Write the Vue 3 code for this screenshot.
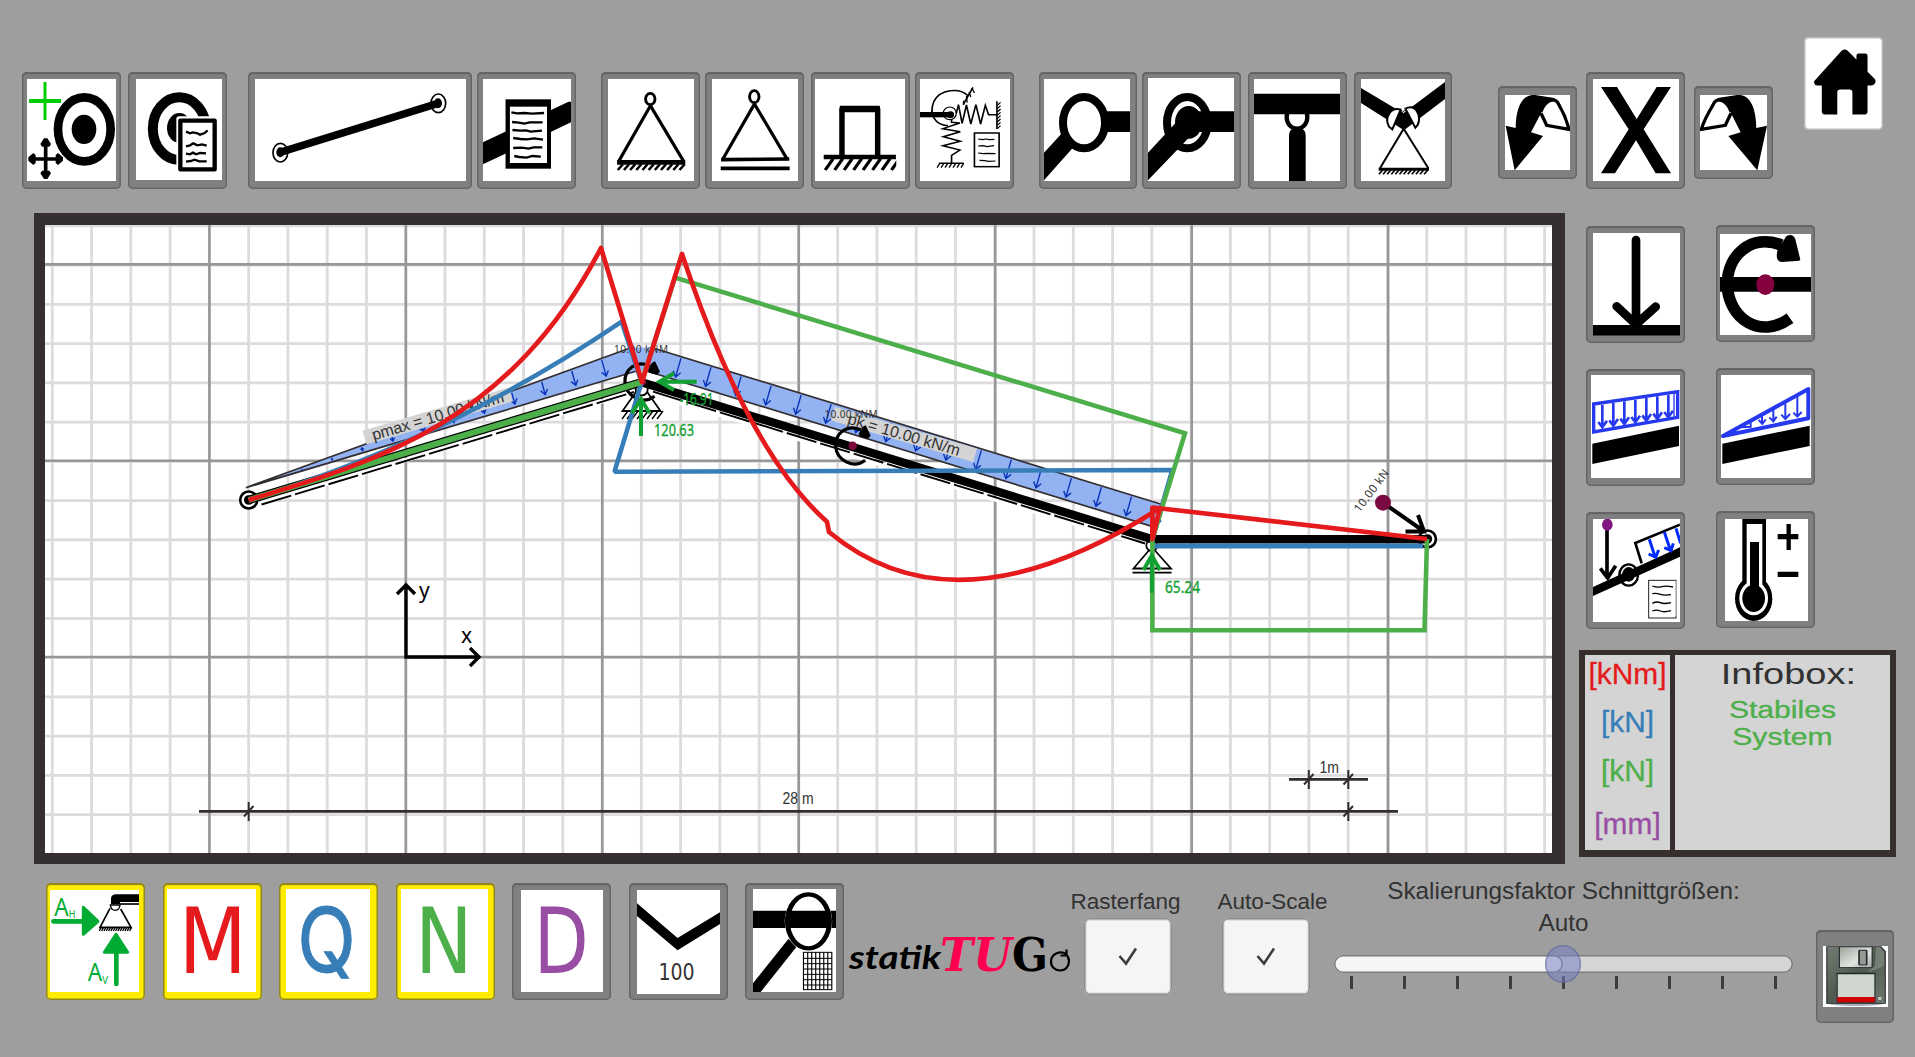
<script setup>
const range = (n) => Array.from({ length: n }, (_, i) => i)

// grid of the drawing area, one cell = 1 m
const minorX = range(39).map((i) => 52.3 + i * 39.27).filter((x) => x < 1552)
const minorY = range(16).map((i) => 225.8 + i * 39.25).filter((y) => y < 853)
const majorX = range(7).map((i) => 209.4 + i * 196.46)
const majorY = range(3).map((i) => 264.4 + i * 196.3)

// arrows of the distributed loads
const arrow = (x1, y1, x2, y2, w) => {
  const dx = x2 - x1
  const dy = y2 - y1
  const l = Math.hypot(dx, dy) || 1
  const ux = dx / l
  const uy = dy / l
  const f = (v) => v.toFixed(1)
  const s = Math.min(w, l * 0.6)
  return `M${f(x1)} ${f(y1)}L${f(x2)} ${f(y2)}M${f(x2 - ux * s - uy * s * 0.7)} ${f(y2 - uy * s + ux * s * 0.7)}L${f(x2)} ${f(y2)}L${f(x2 - ux * s + uy * s * 0.7)} ${f(y2 - uy * s - ux * s * 0.7)}`
}
const rightArrows = range(17).map((k) => {
  const x = 681 + k * 30.03
  const y = 347.7 + (x - 652.2) * 0.3075 + 1.5
  return arrow(x, y, x - 5.5, y + 19, 5.5)
})
const leftArrows = range(11).map((k) => {
  const x = 601.7 - k * 30
  const y = 487.7 - (x - 245.8) * 0.3633 + 1.5
  const gap = Math.max((x - 245.8) * 0.0575 - 3, 1)
  return arrow(x, y, x + gap * 0.26, y + gap * 0.93, 5)
})

const ticks = range(9)
</script>

<template>
  <div class="app">
    <header class="top">
      <button class="tool t-node">
        <svg viewBox="81 57 267 306" preserveAspectRatio="none">
          <path d="M87 123H183" stroke="#0c0" stroke-width="12" /><path d="M135 66V180" stroke="#0c0" stroke-width="9" />
          <ellipse cx="253" cy="208" rx="79" ry="96" fill="none" stroke="#000" stroke-width="26" />
          <ellipse cx="252" cy="208" rx="37" ry="44" />
          <path d="M137 245V345M92 297H182" stroke="#000" stroke-width="11" />
          <path d="M132 235h10l11 17-5 8h-22l-5-8zM132 357h10l11-17-5-8h-22l-5 8zM85 292v10l15 13 7-6v-24l-7-6zM189 292v10l-15 13-7-6v-24l7-6z" />
        </svg>
      </button>
      <button class="tool t-node-edit">
        <svg viewBox="408 57 258 303" preserveAspectRatio="none">
          <ellipse cx="538" cy="206" rx="79.500" ry="94" fill="none" stroke="#000" stroke-width="30" />
          <ellipse cx="538" cy="204" rx="37" ry="45" />
          <rect x="529" y="169" width="130" height="170" rx="8" fill="#fff" />
          <rect x="541" y="182" width="103" height="146" fill="#fff" stroke="#000" stroke-width="13" stroke-linejoin="round" />
          <path d="M558 215l12 5 8-3 12 2 10 5 14-5 9-8M558 259l12-3 10-6 12 6 14-3 14 4M558 281l12 2 9-5 9 5 13-4 17 1M558 305l14-2 12-4 14 5 22 0" fill="none" stroke="#000" stroke-width="7" />
        </svg>
      </button>
      <button class="tool t-beam">
        <svg viewBox="765 57 633 306" preserveAspectRatio="none">
          <g fill="#fff" stroke="#000" stroke-width="5"><ellipse cx="841" cy="278" rx="22" ry="28" /><ellipse cx="1315" cy="130" rx="22" ry="28" /></g>
          <ellipse cx="841" cy="277" rx="12" ry="15" /><ellipse cx="1314" cy="130" rx="12" ry="15" />
          <path d="M840 277L1314 130" stroke="#000" stroke-width="23" />
        </svg>
      </button>
      <button class="tool t-beam-edit">
        <svg viewBox="63 57 242 306" preserveAspectRatio="none">
          <path d="M63 247L298 125H305V187L63 313z" />
          <rect x="125" y="118" width="125" height="208" />
          <rect x="137" y="140" width="102" height="169" fill="#fff" />
          <path d="M141 157l16 3 20-1 20 2 34-2M143 186l18 2 16 3 14-4 36 0M144 210l22 2 16-1 12 4 31-3M146 234l20 3 18 1 20-3 24 4M146 264l24-1 18 3 14-4 24 0M149 288l14 3 20 2 16-5 23 2" fill="none" stroke="#000" stroke-width="7" />
        </svg>
      </button>

      <button class="tool t-pin">
        <svg viewBox="407 57 237 306" preserveAspectRatio="none">
          <g fill="none" stroke="#000">
            <ellipse cx="523.500" cy="117" rx="13" ry="17" stroke-width="8" />
            <path d="M524 137L437 303M524 137L615 303" stroke-width="9" /><path d="M432 307H620" stroke-width="14" />
            <path v-for="i in range(11)" :key="i" :d="`M${434 + i * 17} 330L${448 + i * 17} 313`" stroke-width="7" />
          </g>
        </svg>
      </button>
      <button class="tool t-roller">
        <svg viewBox="693 57 237 306" preserveAspectRatio="none">
          <g fill="none" stroke="#000">
            <ellipse cx="809.500" cy="110" rx="13" ry="18" stroke-width="8" />
            <path d="M722 299L810 132L901 299" stroke-width="9" />
            <path d="M718 299L906 297M717 325H907" stroke-width="11" />
          </g>
        </svg>
      </button>
      <button class="tool t-fixed">
        <svg viewBox="977 57 247 306" preserveAspectRatio="none">
          <path d="M1051 290V148H1149V290" fill="none" stroke="#000" stroke-width="15" stroke-linejoin="round" /><path d="M1045 147H1155" stroke="#000" stroke-width="19" />
          <path d="M1001 291H1199" stroke="#000" stroke-width="13" />
          <path v-for="i in range(8)" :key="i" :d="`M${1005 + i * 26} 330L${1027 + i * 26} 296`" stroke="#000" stroke-width="9" />
          <path d="M1200 290h24v45h-24z" fill="#fff" />
        </svg>
      </button>
      <button class="tool t-spring">
        <svg viewBox="1265 57 248 306" preserveAspectRatio="none">
          <path d="M1265 164H1350" stroke="#000" stroke-width="16" /><circle cx="1349" cy="164" r="10" />
          <g fill="none" stroke="#000" stroke-width="4.500">
            <path d="M1398 108C1375 82 1320 86 1303 125C1289 162 1306 196 1342 197" />
            <ellipse cx="1347" cy="160" rx="18" ry="19" stroke-width="3.500" />
            <path d="M1365 160L1371 134 1381 190 1393 135 1405 192 1419 134 1432 192 1445 136 1454 164H1477" />
            <path d="M1352 177V187L1375 189 1328 206 1376 215 1329 230 1376 244 1328 257 1375 270 1352 286V310" />
            <path d="M1317 310H1386M1477 124V207" />
            <path d="M1384 134L1411 82" />
            <path v-for="i in range(7)" :key="'g' + i" :d="`M${1312 + i * 11} 323L${1319 + i * 11} 311`" stroke-width="3.500" />
            <path v-for="i in range(8)" :key="'w' + i" :d="`M1478 ${136 + i * 10}L1487 ${127 + i * 10}`" stroke-width="3.500" />
            <path d="M1385 122v13M1393 108l2 20M1400 96l5 15M1408 84l7 15" stroke-width="3.500" />
            <rect x="1415" y="219" width="68" height="101" />
            <path d="M1425 237l12 2 10-2 10 2 13-1M1425 258l14-1 10 3 20-3M1425 279l14 2 12-1 22 1M1429 301l14 1 12 2 18-1" stroke-width="3.500" />
          </g>
        </svg>
      </button>

      <button class="tool t-hinge">
        <svg viewBox="72 57 258 306" preserveAspectRatio="none">
          <path d="M250 154H330V216H250zM72 278L127 218L160 262L72 361z" />
          <ellipse cx="192" cy="188" rx="63" ry="77" fill="#fff" stroke="#000" stroke-width="24" />
        </svg>
      </button>
      <button class="tool t-rigid">
        <svg viewBox="384 54 258 309" preserveAspectRatio="none">
          <ellipse cx="502" cy="188" rx="61" ry="77" fill="#fff" stroke="#000" stroke-width="24" />
          <ellipse cx="506" cy="187" rx="41" ry="49" />
          <path d="M506 154H642V216H506zM384 278L466 190L505 235L384 361z" />
        </svg>
      </button>
      <button class="tool t-tee">
        <svg viewBox="702 57 258 306" preserveAspectRatio="none">
          <ellipse cx="831" cy="172" rx="31" ry="34" fill="#fff" stroke="#000" stroke-width="13" />
          <path d="M702 101H960V163H702zM807 363V228Q807 207 822 206H842Q857 207 857 228V363z" />
        </svg>
      </button>
      <button class="tool t-hinge-pin">
        <svg viewBox="1023 57 252 306" preserveAspectRatio="none">
          <path d="M1023 84L1150 160L1275 66V117L1152 211L1023 129z" />
          <g fill="#fff" stroke="#000" stroke-width="6"><path d="M1142 149C1112 140 1092 173 1107 200L1117 208z" /><path d="M1156 146C1188 130 1205 168 1193 195L1186 203z" /></g>
          <path d="M1142 146L1147 158 1158 146" fill="#fff" stroke="#000" stroke-width="3" />
          <path d="M1151 206L1080 325M1151 206L1225 325" stroke="#000" stroke-width="6" /><path d="M1076 328H1227" stroke="#000" stroke-width="9" />
          <path v-for="i in range(12)" :key="i" :d="`M${1077 + i * 12.3} 343L${1088 + i * 12.3} 330`" stroke="#000" stroke-width="5" />
        </svg>
      </button>

      <button class="tool t-undo">
        <svg viewBox="105 225 195 225" preserveAspectRatio="none">
          <path d="M137 324C138 255 160 222 195 225L253 234L256 244C236 242 226 252 216 274L183 337L219 348L134 451L107 317z" />
          <path d="M213 274C225 243 255 225 267 255C282 280 290 300 297 328L230 316L213 280" fill="none" stroke="#000" stroke-width="10" />
        </svg>
      </button>
      <button class="tool t-clear">
        <svg viewBox="369 177 258 306" preserveAspectRatio="none">
          <path d="M393 201H441L500 297L560 201H603L521 328L603 460H557L498 361L435 460H393L476 328z" />
        </svg>
      </button>
      <button class="tool t-redo">
        <svg viewBox="690 225 201 225" preserveAspectRatio="none">
          <path d="M859 324C858 255 836 222 801 225L743 234L740 244C760 242 770 252 780 274L812 337L775 348L862 451L891 317z" />
          <path d="M783 274C771 243 741 225 729 255C714 280 702 300 694 328L766 316L783 280" fill="none" stroke="#000" stroke-width="10" />
        </svg>
      </button>
      <button class="tool home">
        <svg viewBox="1002 50 235 278" preserveAspectRatio="none">
          <path d="M1032 182L1114 91Q1123 83 1132 91L1158 117V105Q1158 99 1165 99H1184Q1191 99 1191 106V154L1212 175Q1218 182 1212 190Q1209 195 1202 195H1191V272Q1191 282 1181 282H1146V216Q1146 207 1137 207H1110Q1101 207 1101 216V282H1066Q1055 282 1055 272V195H1042Q1032 195 1032 182z" />
        </svg>
      </button>
    </header>

    <main class="middle">
      <div class="frame">
        <svg class="drawing" viewBox="45 225 1507 628" preserveAspectRatio="none">
          <g stroke="#dddbdd" stroke-width="2.800">
            <path v-for="x in minorX" :key="'x' + x" :d="`M${x} 225V853`" />
            <path v-for="y in minorY" :key="'y' + y" :d="`M45 ${y}H1552`" />
          </g>
          <g stroke="#979797" stroke-width="2.600">
            <path v-for="x in majorX" :key="'X' + x" :d="`M${x} 225V853`" />
            <path v-for="y in majorY" :key="'Y' + y" :d="`M45 ${y}H1552`" />
          </g>

          <g fill="#92b2f2">
            <path d="M245.800 487.700L631.500 347.500L638.400 370.500z" />
            <path d="M652.200 347.700L1163 504.700L1156 527.600L645 370.500z" />
            <path d="M631.500 347.500H652.200L645 370.500H638.400z" />
          </g>
          <g stroke="#332d2f" stroke-width="1.700">
            <path d="M245.800 487.700L631.500 347.500M245.800 487.700L638.400 370.500M652.200 347.700L1163 504.700M645 370.500L1156 527.600" />
          </g>
          <g fill="none" stroke="#0a34b8" stroke-width="1.400">
            <path v-for="d in rightArrows" :key="d" :d="d" />
            <path v-for="d in leftArrows" :key="d" :d="d" />
          </g>

          <g transform="translate(362.500 430.700) rotate(-16.500)">
            <rect width="152.500" height="14.500" fill="#d4d4d4" />
            <text class="sans" x="8" y="12.500" font-size="16" textLength="137">pmax = 10.00 kN/m</text>
          </g>
          <g transform="translate(835 407) rotate(16.300)">
            <rect width="148" height="14" fill="#d4d4d4" />
            <text class="sans" x="16" y="12.500" font-size="16" textLength="116">pk = 10.00 kN/m</text>
          </g>
          <text class="noto" x="614" y="352.500" font-size="10" textLength="54">10.00 kNM</text>
          <text class="noto" x="824.500" y="417.700" font-size="10" textLength="53">10.00 kNM</text>

          <g fill="none">
            <path d="M261 503.500L634 392M652 394L1146 546" stroke="#fff" stroke-width="4" />
            <path d="M261.500 504.500L634 392M653 391.700L1145 543.500" stroke="#000" stroke-width="1.900" stroke-dasharray="31 4" />
          </g>

          <g stroke="#000" stroke-width="2.600">
            <circle cx="248.700" cy="500" r="8.500" fill="#fff" /><circle cx="248.700" cy="500" r="3.500" />
            <circle cx="1427.400" cy="539" r="8.500" fill="#fff" /><circle cx="1427.400" cy="539" r="3.500" />
          </g>
          <g fill="#fff" stroke="#000" stroke-width="1.800">
            <path d="M641.600 384L622.500 411H660.500z" />
            <path v-for="i in range(8)" :key="i" :d="`M${622 + i * 5} 419L${628 + i * 5} 411`" stroke-width="1.400" />
            <circle cx="641.700" cy="389.500" r="6" />
            <path d="M1151.800 547L1133.500 568.500H1171z" /><path d="M1132.500 572.700H1171.500" />
            <circle cx="1151.800" cy="545.500" r="5.500" />
          </g>
          <g stroke="#000">
            <path d="M248.700 500L641.600 382.200" stroke-width="8.500" />
            <path d="M641.600 382.200L1152.400 539.200H1427.400" fill="none" stroke-width="8.400" />
          </g>

          <g v-for="c in [[642, 381.700], [852.700, 445.700]]" :key="c[0]" :transform="`translate(${c[0]} ${c[1]})`">
            <path d="M8 -16C-6 -22 -18 -12 -17 1C-16 14 0 24 12.500 14.500" fill="none" stroke="#000" stroke-width="3.200" />
            <path d="M10 -19L13 -20.500L18 -10L15 -7L7 -9L6 -12z" />
            <circle r="4.200" fill="#7d0a3e" />
          </g>

          <g fill="none" stroke="#377eb8" stroke-width="4.600">
            <path d="M248.700 500Q445.200 441 621.700 321.700L641.600 382.200L614.500 471.700L1172.300 470L1152.400 539" stroke-linejoin="bevel" />
            <path d="M1153 546H1423" stroke-width="4.800" />
          </g>
          <g fill="none" stroke="#4daf4a" stroke-width="4.600">
            <path d="M248.700 500L641.600 382.200" stroke-width="6" />
            <path d="M641.600 382.200L675 277.500L1185 433.300L1152.400 539V630.300H1424.500L1427 539" />
          </g>
          <path d="M248.700 500C379.700 460.700 510.600 421.500 601 248L642 382L682 254Q747.700 452 827 521.700L829 532Q957 638.500 1160 508L1152.400 539V507.500L1427 539" fill="none" stroke="#e41a1c" stroke-width="4.700" stroke-linejoin="round" />

          <g fill="none" stroke="#12a032" stroke-width="4">
            <path d="M641 436V400M632 413.300L641 399L649.500 413.300M696.700 381.700H661M674 373.300L659.500 381.700L674 390M1151.800 592.700V556M1143.500 570L1151.800 555.500L1160 570" />
          </g>
          <g class="noto green" font-size="16.500">
            <text x="679.500" y="405" textLength="34" lengthAdjust="spacingAndGlyphs">-16.91</text>
            <text x="654" y="436" textLength="40" lengthAdjust="spacingAndGlyphs">120.63</text>
            <text x="1165" y="593" textLength="35" lengthAdjust="spacingAndGlyphs">65.24</text>
          </g>

          <path d="M1383 502.700L1423.500 531M1418 515L1424 531.500L1405.500 531.500" fill="none" stroke="#000" stroke-width="4" />
          <circle cx="1383" cy="502.700" r="8" fill="#7a0a42" />
          <text class="noto" transform="translate(1359.500 513) rotate(-53)" font-size="11.500" textLength="50">10.00 kN</text>

          <path d="M406 586V657H478M397 594L406 585L415 594M470 648L479 657L470 666" fill="none" stroke="#000" stroke-width="3.400" />
          <text class="noto dark" x="419" y="598" font-size="21">y</text>
          <text class="noto dark" x="461" y="643" font-size="21">x</text>

          <g stroke="#332d2f" stroke-width="2.800">
            <path d="M1289 779.300H1368M199 811.300H1398" />
            <path d="M1308.800 770V789M1304 784.500L1313.500 774M1348.300 770V789M1343.500 784.500L1353 774M1348.300 802V821M1343.500 816.500L1353 806M248.700 802V821M244 816.500L253.500 806" stroke-width="2" />
          </g>
          <text class="sans" x="1319.500" y="773" font-size="16" textLength="19.500" lengthAdjust="spacingAndGlyphs">1m</text>
          <text class="sans" x="782.500" y="804" font-size="16" textLength="31" lengthAdjust="spacingAndGlyphs">28 m</text>
        </svg>
      </div>

      <aside class="side">
        <div class="loads">
          <div class="col">
            <button class="tool l-force">
              <svg viewBox="99 69 261 309" preserveAspectRatio="none">
                <path d="M99 345H360V377H99z" />
                <path d="M228 90V340M170 289L228 343L287 290" fill="none" stroke="#000" stroke-width="26" stroke-linecap="round" />
              </svg>
            </button>
            <button class="tool l-line">
              <svg viewBox="93 495 267 309" preserveAspectRatio="none">
                <path d="M97 701L357 647V708L97 762z" />
                <g fill="none" stroke="#2739ee">
                  <path d="M101 582L353 545V622L101 666z" stroke-width="10" />
                  <path v-for="i in range(7)" :key="i" :d="`M${127 + i * 33} ${584 - i * 5}v68m-12 -16l12 16l14 -20`" stroke-width="8" />
                  <path d="M342 550v70" stroke-width="4" />
                </g>
              </svg>
            </button>
            <button class="tool l-edit">
              <svg viewBox="99 927 261 309" preserveAspectRatio="none">
                <path d="M99 1131L360 1012V1040L99 1158z" />
                <ellipse cx="206" cy="1095" rx="28" ry="32" fill="none" stroke="#000" stroke-width="7" /><ellipse cx="206" cy="1093" rx="19" ry="22" />
                <path d="M245 1060L226 999L360 944" fill="none" stroke="#000" stroke-width="8" />
                <path d="M141 955V1105M121 1075L143 1104L167 1067" fill="none" stroke="#000" stroke-width="11" />
                <ellipse cx="142" cy="944" rx="16" ry="18" fill="#801880" />
                <path d="M268 988L285 1040M266 1032L287 1042L296 1020M313 966L331 1020M313 1013L333 1022L340 1000M348 955L362 1000" fill="none" stroke="#002bff" stroke-width="9" />
                <rect x="266" y="1111" width="82" height="113" fill="#fff" stroke="#222" stroke-width="3" />
                <path d="M347 1112V1218" stroke="#ccc" stroke-width="4" />
                <path d="M277 1128q15 6 28 2t34 1M277 1151q13-2 24 2t32 1M277 1180q13-7 24-2t32 0M277 1203q13-5 24 0t32-1" fill="none" stroke="#000" stroke-width="4" />
              </svg>
            </button>
          </div>
          <div class="col right">
            <button class="tool l-moment">
              <svg viewBox="480 72 273 303" preserveAspectRatio="none">
                <path d="M480 201H753V245H480z" />
                <path d="M664 105C575 70 501 135 502 224C504 325 600 390 690 325" fill="none" stroke="#000" stroke-width="35" />
                <path d="M675 85Q679 75 692 75Q703 77 706 88L721 149L717 152L666 156Q645 155 652 122z" />
                <ellipse cx="616" cy="224" rx="27" ry="31" fill="#84003e" />
              </svg>
            </button>
            <button class="tool l-tri">
              <svg viewBox="483 495 270 309" preserveAspectRatio="none">
                <path d="M487 701L749 647V708L487 762z" />
                <g fill="none" stroke="#2739ee">
                  <path d="M489 678L745 537V625z" stroke-width="12" stroke-linejoin="round" />
                  <path d="M712 558V620M700 608L712 620L725 606M676 580V625M664 614L676 627L690 612M640 598V632M628 622L640 634L650 620M606 616V640M596 630L607 642L617 628M572 636V648M540 652L575 650" stroke-width="6" />
                </g>
              </svg>
            </button>
            <button class="tool l-temp">
              <svg viewBox="495 927 249 306" preserveAspectRatio="none">
                <ellipse cx="581" cy="1166" rx="56" ry="67" /><path d="M547 927H618V1115H547z" />
                <ellipse cx="581" cy="1165" rx="43" ry="51" fill="#fff" /><path d="M560 942H607V1130H560z" fill="#fff" />
                <ellipse cx="581" cy="1165" rx="34" ry="41" /><path d="M570 996H597V1140H570z" />
                <path d="M653 980H715M653 1093H715" stroke="#000" stroke-width="16" /><path d="M686 942V1020" stroke="#000" stroke-width="13" />
              </svg>
            </button>
          </div>
        </div>

        <div class="info">
          <div class="units">
            <span class="u-m">[kNm]</span>
            <span class="u-q">[kN]</span>
            <span class="u-n">[kN]</span>
            <span class="u-d">[mm]</span>
          </div>
          <div class="message">
            <div class="title">Infobox:</div>
            <div class="status">Stabiles<br />System</div>
          </div>
        </div>
      </aside>
    </main>

    <footer class="bottom">
      <div class="results">
        <button class="tool on r-a">
          <svg viewBox="90 90 267 306" preserveAspectRatio="none">
            <g fill="#00ab33" stroke="#00ab33" stroke-linecap="round" stroke-linejoin="round">
              <path d="M100 184H190M289 372V280" stroke-width="14" /><path d="M190 142V223L234 184zM253 277L288 223L323 277z" stroke-width="9" />
            </g>
            <g class="noto">
              <text transform="translate(103 169) scale(.87 1)" font-size="78">A</text><text transform="translate(146 173) scale(.85 1)" font-size="32">H</text>
              <text transform="translate(203 364) scale(.87 1)" font-size="78">A</text><text transform="translate(247 373) scale(.9 1)" font-size="32">V</text>
            </g>
            <path d="M273 133V115Q275 103 288 103H357V126H300V133z" /><path d="M300 132H357" stroke="#000" stroke-width="5" />
            <path d="M270 145L240 202H333L302 147" fill="none" stroke="#000" stroke-width="5" />
            <path d="M271 135Q273 151 286 151Q299 150 300 135z" fill="#fff" stroke="#000" stroke-width="4" />
            <path v-for="i in range(14)" :key="i" :d="`M${238 + i * 7} 213L${243 + i * 7} 203`" stroke="#000" stroke-width="4" />
          </svg>
        </button>
        <button class="tool on r-m">
          <svg viewBox="441 87 264 309" preserveAspectRatio="none"><text class="deja red" transform="translate(476 340) scale(.86 1)" font-size="272">M</text></svg>
        </button>
        <button class="tool on r-q">
          <svg viewBox="798 87 252 309" preserveAspectRatio="none"><text class="inter blue" transform="translate(832 336) scale(.85 1)" font-size="270">Q</text></svg>
        </button>
        <button class="tool on r-n">
          <svg viewBox="1143 87 261 309" preserveAspectRatio="none"><text class="deja grass" transform="translate(1185 340) scale(.85 1)" font-size="272">N</text></svg>
        </button>
        <button class="tool r-d">
          <svg viewBox="81 90 214 306" preserveAspectRatio="none"><text class="deja violet" transform="translate(114 340) scale(.685 1)" font-size="272">D</text></svg>
        </button>
        <button class="tool r-100">
          <svg viewBox="384 90 217 312" preserveAspectRatio="none">
            <path d="M384 130L490 234L601 157V192L490 271L384 168z" />
            <text class="deja" transform="translate(440 359) scale(.73 1)" font-size="68">100</text>
          </svg>
        </button>
        <button class="tool r-zoom">
          <svg viewBox="687 87 217 309" preserveAspectRatio="none">
            <path d="M687 152H904V204H687z" />
            <path d="M780 236L800 262L707 396H687V370z" />
            <ellipse cx="832" cy="184" rx="62" ry="89" fill="#fff" /><path d="M778 152H886V204H778z" />
            <ellipse cx="832" cy="184" rx="55" ry="81" fill="none" stroke="#000" stroke-width="13" />
            <g fill="none" stroke="#000" stroke-width="3">
              <rect x="819" y="277" width="74" height="112" />
              <path v-for="i in range(6)" :key="'h' + i" :d="`M819 ${295 + i * 16}H893`" />
              <path v-for="i in range(6)" :key="'v' + i" :d="`M${830 + i * 10.5} 277V389`" />
            </g>
          </svg>
        </button>
      </div>

      <svg class="logo" viewBox="848 930 224 50">
        <text class="script" x="849" y="969" textLength="92" lengthAdjust="spacingAndGlyphs">statik</text>
        <text class="slab italic" x="940" y="971" font-size="46" textLength="72" lengthAdjust="spacingAndGlyphs">TU</text>
        <text class="slab" x="1012" y="971" font-size="46" textLength="36" lengthAdjust="spacingAndGlyphs">G</text>
        <path d="M1066 954C1060 950 1051 954 1051 961.500C1051 967 1055 970.500 1060 970.500C1066 970.500 1069 966 1069 961C1069 957 1067 955 1065 953M1066.500 949.500V955.500H1060.500" fill="none" stroke="#000" stroke-width="2.200" />
      </svg>

      <div class="toggle first">
        <label>Rasterfang</label>
        <div class="box"><svg viewBox="0 0 20 20"><path d="M1.500 9L8 16.500L18 1.500" /></svg></div>
      </div>
      <div class="toggle second">
        <label>Auto-Scale</label>
        <div class="box"><svg viewBox="0 0 20 20"><path d="M1.500 9L8 16.500L18 1.500" /></svg></div>
      </div>

      <div class="scale">
        <div class="caption">Skalierungsfaktor Schnittgrößen:</div>
        <div class="caption">Auto</div>
        <div class="track">
          <div class="fill"></div>
          <div class="knob"></div>
        </div>
        <div class="ticks"><i v-for="t in ticks" :key="t"></i></div>
      </div>

      <button class="tool save">
        <svg viewBox="1399 258 119 183" preserveAspectRatio="none">
          <defs>
            <linearGradient id="metal" x1="0" x2="1" y1="0" y2="1"><stop offset="0" stop-color="#747d73" /><stop offset=".5" stop-color="#50594f" /><stop offset="1" stop-color="#6e776d" /></linearGradient>
            <linearGradient id="shutter" x1="0" x2="1" y1="0" y2="1"><stop offset="0" stop-color="#9ba39b" /><stop offset=".6" stop-color="#e0e4df" /><stop offset="1" stop-color="#a3aaa3" /></linearGradient>
          </defs>
          <ellipse cx="1459" cy="430" rx="52" ry="8" fill="#a8adb5" />
          <path d="M1406 260H1505L1513 274V430H1406z" fill="url(#metal)" stroke="#20282b" stroke-width="2" />
          <path d="M1496 262H1503L1511 276V318L1480 338L1494 318z" fill="#8c948b" opacity=".6" />
          <path d="M1429 261H1489V322H1429z" fill="url(#shutter)" stroke="#20282b" stroke-width="2" />
          <rect x="1465" y="271" width="14" height="44" rx="2" fill="#929a91" stroke="#20282b" stroke-width="3" />
          <path d="M1424 338H1495V428H1424z" fill="#20282b" /><path d="M1426 343H1493V411H1426z" fill="#d0d5ce" /><path d="M1425 411H1494V427H1425z" fill="#cf0000" />
          <rect x="1500" y="411" width="6" height="9" fill="#c4cac2" />
        </svg>
      </button>
    </footer>
  </div>
</template>

<style>
body {
  background: #9e9e9e;
}
</style>

<style scoped>
.app {
  width: 1915px;
  height: 1057px;
  overflow: hidden;
  background: #9e9e9e;
  font-family: "Liberation Sans", sans-serif;
  color: #323232;
}
.tool {
  display: block;
  flex: none;
  box-sizing: border-box;
  width: 99px;
  height: 117px;
  margin: 0;
  border: 0;
  border-radius: 5px;
  background: #808080;
  box-shadow: inset 0 0 0 1.500px #666, inset 0 2px 1px #5f5f5f;
}
.tool svg {
  display: block;
  width: 100%;
  height: 100%;
  background: #fff;
}
.tool.on {
  background: #ffec00;
  box-shadow: inset 0 0 0 1.500px #8f8620, inset 0 2px 1px #8f8620;
}

.top {
  display: flex;
  align-items: flex-start;
  height: 213px;
  padding: 72px 0 0 22px;
  box-sizing: border-box;
}
.t-node { padding: 7px 5px 8px 5px; }
.t-node-edit { margin-left: 7px; padding: 7px 5px 9px 8px; }
.t-beam { width: 224px; margin-left: 21px; padding: 7px 6px 8px 7px; }
.t-beam-edit { margin-left: 5px; padding: 7px 5px 8px 6px; }
.t-pin { margin-left: 25px; padding: 7px 6px 8px 7px; }
.t-roller { margin-left: 5px; padding: 7px 6px 8px 7px; }
.t-fixed { margin-left: 7px; padding: 7px 5px 8px 4px; }
.t-spring { margin-left: 5px; padding: 7px 4px 8px 5px; }
.t-hinge { width: 98px; margin-left: 25px; padding: 7px 7px 8px 5px; }
.t-rigid { margin-left: 5px; padding: 6px 7px 8px 6px; }
.t-tee { margin-left: 7px; padding: 7px 7px 8px 6px; }
.t-hinge-pin { width: 98px; margin-left: 7px; padding: 7px 7px 8px 7px; }
.t-undo { width: 79px; height: 93px; margin: 14px 0 0 46px; padding: 9px 7px 9px 7px; }
.t-clear { margin-left: 9px; padding: 7px 6px 8px 7px; }
.t-redo { width: 79px; height: 93px; margin: 14px 0 0 9px; padding: 9px 6px 9px 6px; }
.home {
  width: 79px;
  height: 93px;
  margin: -35px 0 0 31px;
  padding: 0;
  background: #fff;
  box-shadow: inset 0 0 0 1.500px #b9b9b9;
}
.home svg { background: none; }

.middle { display: flex; height: 651px; }
.frame {
  box-sizing: border-box;
  width: 1531px;
  height: 651px;
  margin-left: 34px;
  border: solid #362f2f;
  border-width: 12px 13px 11px 11px;
  background: #fff;
}
.drawing { display: block; width: 1507px; height: 628px; }
text { fill: #333; }
.sans { font-family: "Liberation Sans", sans-serif; }
.noto { font-family: "Noto Sans", sans-serif; }
.green text { fill: #12a032; stroke: #12a032; stroke-width: .35; }
.r-a text { fill: #00ab33; }
.dark { fill: #000; }
.deja { font-family: "DejaVu Sans", sans-serif; }
.inter { font-family: Inter, sans-serif; }
.red { fill: #e41a1c; }
.blue { fill: #377eb8; stroke: #377eb8; stroke-width: 3; }
.grass { fill: #4daf4a; }
.violet { fill: #984ea3; }
.r-m svg, .r-q svg, .r-n svg, .r-d svg { overflow: visible; }

.side { width: 317px; margin-left: 14px; }
.loads { display: flex; gap: 31px; padding-left: 7px; height: 437px; box-sizing: border-box; }
.col { display: flex; flex-direction: column; gap: 26px; padding-top: 13px; }
.col.right { padding-top: 12px; }
.l-force { padding: 7px 5px 7px 7px; }
.l-line { padding: 6px 5px 8px 5px; }
.l-edit { padding: 7px 5px 7px 7px; }
.l-moment { padding: 9px 4px 7px 4px; }
.l-tri { padding: 7px 4px 7px 5px; }
.l-temp { padding: 8px 7px 7px 9px; }

.info {
  display: flex;
  gap: 5px;
  box-sizing: border-box;
  width: 317px;
  height: 207px;
  border: solid #362f2d;
  border-width: 5px 6px 7px;
  background: #362f2d;
}
.units, .message { background: #d4d4d4; text-align: center; }
.units {
  display: flex;
  flex-direction: column;
  width: 85px;
  font-size: 29px;
  line-height: 33px;
}
.units span { display: block; transform: scaleX(1.030); -webkit-text-stroke: .3px currentColor; }
.u-m { margin-top: 3px; color: #e41a1c; }
.u-q { margin-top: 15px; color: #377eb8; }
.u-n { margin-top: 16px; color: #4daf4a; }
.u-d { margin-top: 20px; color: #984ea3; }
.message { flex: 1; }
.title {
  margin-top: 3px;
  padding-left: 9px;
  font-size: 29px;
  line-height: 33px;
  transform: scaleX(1.310);
}
.status {
  margin-top: 6px;
  font-size: 23px;
  line-height: 26.600px;
  color: #4daf4a;
  transform: scaleX(1.310);
  -webkit-text-stroke: .3px currentColor;
}

.bottom { display: flex; align-items: flex-start; height: 193px; }
.results { display: flex; gap: 17.500px; margin: 19px 0 0 46px; }
.r-a { padding: 7px 6px 8px 4px; }
.r-m { padding: 6px 6px 8px 4px; }
.r-q { padding: 6px 8px 8px 7px; }
.r-n { padding: 6px 7px 8px 5px; }
.r-d { padding: 7px 8px 8px 9px; }
.r-100 { padding: 7px 8px 6px 8px; }
.r-zoom { padding: 6px 8px 8px 8px; }

.logo { flex: none; width: 224px; height: 50px; margin: 66px 0 0 4px; overflow: visible; }
.script { font: italic bold 32px Lato, sans-serif; fill: #000; }
.slab { font-family: "DejaVu Serif", serif; font-weight: bold; fill: #000; }
.slab.italic { font-style: italic; fill: #ff0050; }

.toggle { flex: none; width: 111px; margin-top: 25px; }
.toggle.first { margin-left: -2px; }
.toggle.second { margin-left: 36px; }
.toggle label {
  display: block;
  font-size: 22.500px;
  line-height: 26px;
  text-align: center;
  white-space: nowrap;
}
.box {
  display: flex;
  align-items: center;
  justify-content: center;
  width: 88px;
  height: 77px;
  margin: 3px 0 0 14px;
  border-radius: 6px;
  background: #f5f5f5;
  box-shadow: inset 0 0 0 1.500px #8c8c8c, inset 0 0 0 3px #e2e2e2;
}
.second .box { margin-left: 5px; }
.box svg { width: 20px; height: 20px; }
.box path { fill: none; stroke: #3c3c3c; stroke-width: 2.600; }

.scale { flex: none; width: 459px; margin: 11px 0 0 6px; }
.caption { font-size: 24.300px; line-height: 32px; text-align: center; white-space: nowrap; }
.track {
  position: relative;
  height: 18px;
  margin-top: 16px;
  border-radius: 9px;
  background: #d5d5d5;
  box-shadow: inset 0 0 0 1.500px #7c7c7c;
}
.fill {
  width: 229px;
  height: 18px;
  border-radius: 9px;
  background: #f5f5f5;
  box-shadow: inset 0 0 0 1.500px #7c7c7c;
}
.knob {
  position: absolute;
  left: 211px;
  top: -10px;
  width: 36px;
  height: 38px;
  border-radius: 50%;
  background: rgba(116, 128, 196, .55);
  box-shadow: inset 0 0 0 1.500px rgba(90, 95, 140, .5);
}
.ticks { display: flex; justify-content: space-between; margin: 3px 16px 0; }
.ticks i { width: 3px; height: 13px; background: #3c3c3c; }

.save { width: 78px; height: 93px; margin: 66px 0 0 23px; padding: 16px 6px 16px 7px; }
</style>
